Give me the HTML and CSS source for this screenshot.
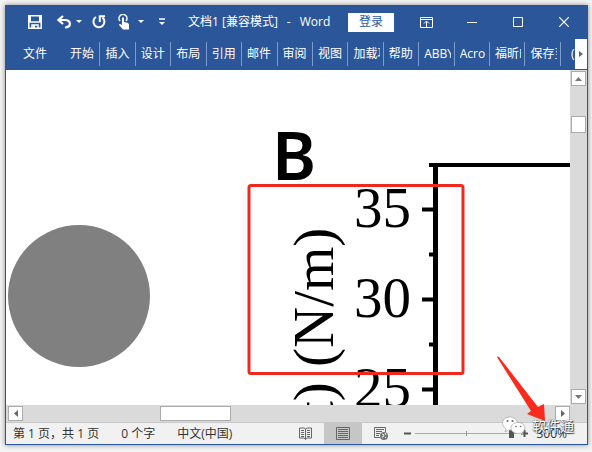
FILE: index.html
```html
<!DOCTYPE html>
<html lang="zh-CN">

<head>
    <meta charset="UTF-8">
    <meta name="viewport" content="width=device-width, initial-scale=1.0">
    <title>文档1 - Word</title>
    <link rel="stylesheet" href="styles.css">
</head>

<body>
    <div class="window">
        <header class="titlebar">
            <div class="quick">
                <button type="button" aria-label="保存">
                    <svg width="14" height="14" viewBox="0 0 14 14"><path d="M.8 .8H13.2V13.2H.8ZM1 7H13M4 13V10H10V13" fill="none" stroke="#fff" stroke-width="1.5"/><path d="M1 1H3V7H1ZM11 1H13V7H11ZM5 10H7V13H5Z" fill="#fff"/></svg>
                </button>
                <button type="button" class="undo" aria-label="撤消">
                    <svg width="25" height="14" viewBox="0 0 25 14"><path d="M6 1L1.5 5L6 9M2 5H8C14 5 15 12 8 12.500" fill="none" stroke="#fff" stroke-width="2.200"/><path d="M19 5H25L22 8Z" fill="#fff"/></svg>
                </button>
                <button type="button" class="redo" aria-label="重复">
                    <svg width="14" height="14" viewBox="0 0 14 14"><path d="M4 2A5.500 5.500 0 1 0 10.500 2.500" fill="none" stroke="#fff" stroke-width="2"/><path d="M7.800 7V1.200H13" fill="none" stroke="#fff" stroke-width="2"/></svg>
                </button>
                <button type="button" class="touch" aria-label="触摸模式">
                    <svg width="26" height="16" viewBox="0 0 26 16"><path d="M2 7A4 4 0 1 1 8 7" fill="none" stroke="#fff" stroke-width="1.500"/><path d="M4 4Q5 2.500 6 4V8L10 9Q11.500 10 11 12V15.500H5L1 11Q1 9 4 11Z" fill="#fff"/><path d="M20 6H26L23 9Z" fill="#fff"/></svg>
                </button>
                <button type="button" class="more" aria-label="自定义快速访问工具栏">
                    <svg width="6" height="8" viewBox="0 0 6 8"><path d="M0 1H6" stroke="#fff" stroke-width="1.500"/><path d="M0 4H6L3 7Z" fill="#fff"/></svg>
                </button>
            </div>
            <h1 class="title"><span>文档1 [兼容模式]</span><span>-</span><span>Word</span></h1>
            <button type="button" class="login">登录</button>
            <div class="controls">
                <button type="button" aria-label="功能区显示选项">
                    <svg width="13" height="11" viewBox="0 0 13 11"><path d="M.5 .5H12.500V10.500H.5ZM.5 2.500H12.500M6.500 10V4.500M4 6.500L6.500 4L9 6.500" fill="none" stroke="#fff"/></svg>
                </button>
                <button type="button" aria-label="最小化">
                    <svg width="10" height="11" viewBox="0 0 10 11"><path d="M0 5.500H10" stroke="#fff"/></svg>
                </button>
                <button type="button" aria-label="最大化">
                    <svg width="10" height="10" viewBox="0 0 10 10"><path d="M.5 .5H9.500V9.500H.5Z" fill="none" stroke="#fff"/></svg>
                </button>
                <button type="button" aria-label="关闭">
                    <svg width="10" height="10" viewBox="0 0 10 10"><path d="M0 0L10 10M10 0L0 10" stroke="#fff" stroke-width="1.200"/></svg>
                </button>
            </div>
        </header>

        <nav class="ribbon">
            <a href="#" class="file">文件</a>
            <div class="tabs">
                <a href="#"><span>开始</span></a>
                <a href="#"><span>插入</span></a>
                <a href="#"><span>设计</span></a>
                <a href="#"><span>布局</span></a>
                <a href="#"><span>引用</span></a>
                <a href="#"><span>邮件</span></a>
                <a href="#"><span>审阅</span></a>
                <a href="#"><span>视图</span></a>
                <a href="#"><span>加载项</span></a>
                <a href="#"><span>帮助</span></a>
                <a href="#"><span>ABBYY</span></a>
                <a href="#"><span>Acro</span></a>
                <a href="#"><span>福昕PDF</span></a>
                <a href="#"><span>保存至</span></a>
            </div>
            <span class="cut">(</span>
            <button type="button" class="scroll-tabs" aria-label="更多选项卡">
                <svg width="4" height="6" viewBox="0 0 4 6"><path d="M0 0L4 3L0 6Z" fill="#666"/></svg>
            </button>
        </nav>

        <main class="work">
            <svg class="page" viewBox="0 0 564 335" preserveAspectRatio="xMinYMin slice">
                <circle cx="73" cy="226" r="71" fill="#808080"/>
                <text class="mark" x="266" y="110">B</text>
                <g class="axis">
                    <path d="M423 95H564" stroke-width="4"/>
                    <path d="M429.500 93V335" stroke-width="5"/>
                    <path d="M416 139.500H429M416 229.500H429M416 319.500H429M423 184.500H429M423 274.500H429" stroke-width="4"/>
                </g>
                <g class="num">
                    <text x="348" y="157">35</text>
                    <text x="348" y="247">30</text>
                    <text x="348" y="337">25</text>
                    <text transform="translate(327 297) rotate(-90)">(N/m)</text>
                    <text transform="translate(327 347) rotate(-90)">t)</text>
                </g>
                <rect x="243" y="115.500" width="214" height="188" rx="2" fill="none" stroke="#ee2a20" stroke-width="3"/>
            </svg>

            <div class="vbar">
                <button type="button" aria-label="向上滚动"><svg width="7" height="4" viewBox="0 0 7 4"><path d="M0 4L3.500 0L7 4Z" fill="#777"/></svg></button>
                <div class="track"><div class="thumb"></div></div>
                <button type="button" aria-label="向下滚动"><svg width="7" height="4" viewBox="0 0 7 4"><path d="M0 0L3.500 4L7 0Z" fill="#777"/></svg></button>
            </div>

            <div class="hbar">
                <button type="button" aria-label="向左滚动"><svg width="4" height="7" viewBox="0 0 4 7"><path d="M4 0L0 3.500L4 7Z" fill="#666"/></svg></button>
                <div class="track"><div class="thumb"></div></div>
                <button type="button" aria-label="向右滚动"><svg width="4" height="7" viewBox="0 0 4 7"><path d="M0 0L4 3.500L0 7Z" fill="#666"/></svg></button>
            </div>
        </main>

        <footer class="status">
            <span>第 1 页，共 1 页</span>
            <span>0 个字</span>
            <span>中文(中国)</span>
            <div class="views">
                <button type="button" aria-label="阅读视图">
                    <svg width="13" height="13" viewBox="0 0 13 13"><path d="M.5 1H5L6.500 2L8 1H12.500V11H8L6.500 12L5 11H.5ZM6.500 2V13M2 3.500H5M2 5.500H5M2 7.500H5M2 9.500H5M8 3.500H11M8 5.500H11M8 7.500H11M8 9.500H11" fill="none" stroke="#666"/></svg>
                </button>
                <button type="button" class="on" aria-label="页面视图">
                    <svg width="14" height="13" viewBox="0 0 14 13"><path d="M.5 .5H13.500V12.500H.5ZM2 2.500H12M2 4.500H12M2 6.500H12M2 8.500H12M2 10.500H12" fill="none" stroke="#666"/></svg>
                </button>
                <button type="button" aria-label="Web 版式视图">
                    <svg width="14" height="13" viewBox="0 0 14 13"><path d="M6 10.500H.5V.5H11.500V5M2 2.500H10M2 4.500H8M2 6.500H6M2 8.500H5" fill="none" stroke="#666"/><circle cx="10" cy="9" r="4" fill="#777"/><path d="M8 7L10 8L9 10L8 10M11 6L12 8M11 11L12 10" fill="none" stroke="#eee"/></svg>
                </button>
            </div>
            <div class="zoom">
                <button type="button" aria-label="缩小"><svg width="7" height="3" viewBox="0 0 7 3"><path d="M0 1.500H7" stroke="#555" stroke-width="2"/></svg></button>
                <input type="range" min="0" max="100" value="96" aria-label="显示比例">
                <button type="button" aria-label="放大"><svg width="7" height="7" viewBox="0 0 7 7"><path d="M0 3.500H7M3.500 0V7" stroke="#555" stroke-width="2"/></svg></button>
                <span class="percent">300%</span>
            </div>
        </footer>

        <svg class="arrow" width="48" height="66" viewBox="0 0 48 66"><path d="M0 1Q0 0 2 1L41 51L47 48L48 65L30 58L34 55Z" fill="#fb2a1c"/></svg>
        <div class="watermark">
            <svg width="24" height="20" viewBox="0 0 24 20"><g fill="#fff" stroke="#999" stroke-width=".6"><path d="M8 1C3 1 .5 4 .5 7.500Q.5 11 4 13L3 16L6.500 14Q14 15 15.500 8C15.500 4 12 1 8 1Z"/><path d="M16 6.500C11.500 6.500 9 9 9 12C9 16 14 18.500 18.500 17L21 18.500L20.500 16Q23 14.500 23 12C23 9 20 6.500 16 6.500Z"/></g><g fill="#666"><circle cx="5.500" cy="5" r="1"/><circle cx="10.500" cy="5" r="1"/><circle cx="14" cy="10.500" r=".8"/><circle cx="18.500" cy="10.500" r=".8"/></g></svg>
            <span>软件通</span>
        </div>
    </div>
</body>

</html>
```

FILE: styles.css
```css
* {
    box-sizing: border-box;
}

body {
    margin: 0;
    height: 100vh;
    padding: 5px 4px 7px 5px;
    background: #f4f4f4;
    font-family: "Open Sans", "Noto Sans CJK SC", sans-serif;
    font-size: 12px;
    line-height: 16px;
}

button {
    display: flex;
    align-items: center;
    justify-content: center;
    padding: 0;
    border: none;
    background: none;
    font: inherit;
}

a {
    color: #fff;
    text-decoration: none;
}

.window {
    position: relative;
    display: flex;
    flex-direction: column;
    height: 100%;
    border: 1px solid #2b579a;
    box-shadow: 0 0 5px #888;
    background: #fff;
}

.titlebar {
    display: flex;
    align-items: center;
    height: 32px;
    background: #2b579a;
    color: #fff;
}

.quick {
    display: flex;
    align-items: center;
    padding-left: 22px;
}

.undo {
    margin-left: 15px;
}

.redo {
    margin-left: 10px;
}

.touch {
    margin-left: 12px;
}

.more {
    margin-left: 15px;
}

.title {
    display: flex;
    gap: 9px;
    margin: 0 0 0 23px;
    font-size: 12px;
    font-weight: normal;
    white-space: nowrap;
}

.login {
    width: 46px;
    height: 19px;
    margin-left: auto;
    background: #fff;
    color: #2b579a;
}

.controls {
    display: flex;
    margin-left: 9px;
}

.controls button {
    width: 46px;
    height: 32px;
}

.ribbon {
    display: flex;
    align-items: center;
    height: 32px;
    background: #2b579a;
    color: #fff;
}

.file {
    width: 59px;
    padding-left: 17px;
}

.tabs {
    display: flex;
    flex: 1;
    min-width: 0;
}

.tabs a {
    flex: 1 1 0;
    min-width: 0;
    padding: 4px 3px 4px 5px;
    border-right: 1px solid #7d9bcb;
}

.tabs span {
    display: block;
    overflow: hidden;
    white-space: nowrap;
}

.cut {
    width: 14px;
    padding-left: 10px;
    overflow: hidden;
}

.scroll-tabs {
    width: 12px;
    height: 30px;
    background: #fff;
}

.work {
    flex: 1;
    min-height: 0;
    display: grid;
    grid-template-columns: 1fr 17px;
    grid-template-rows: 1fr 17px;
}

.page {
    width: 100%;
    height: 100%;
    min-height: 0;
}

.mark {
    font: 600 67px "Noto Sans", sans-serif;
}

.num {
    font: 57px "Liberation Serif", serif;
}

.axis {
    stroke: #000;
}

.vbar,
.hbar {
    display: flex;
    padding: 1px;
    background: #dadada;
}

.vbar {
    flex-direction: column;
}

.hbar {
    grid-column: 1 / 3;
    padding: 1px 17px 1px 2px;
}

.vbar button,
.hbar button,
.thumb {
    width: 15px;
    height: 15px;
    border: 1px solid #ababab;
    background: #fff;
}

.track {
    flex: 1;
}

.vbar .track {
    padding-top: 30px;
}

.vbar .thumb {
    height: 17px;
}

.hbar .track {
    padding-left: 137px;
}

.hbar .thumb {
    width: 71px;
}

.status {
    display: flex;
    align-items: center;
    gap: 22px;
    height: 22px;
    padding-left: 7px;
    background: #f1f1f1;
    border-top: 1px solid #c8c8c8;
    color: #333;
    white-space: nowrap;
}

.views {
    display: flex;
    margin-left: auto;
}

.views button {
    width: 38px;
    height: 21px;
}

.views .on {
    background: #c6c6c6;
}

.zoom {
    display: flex;
    align-items: center;
    gap: 4px;
    margin-left: -18px;
    padding-right: 20px;
}

.zoom input {
    appearance: none;
    width: 102px;
    height: 15px;
    margin: 0;
    background:
        linear-gradient(#999, #999) center / 1px 5px no-repeat,
        linear-gradient(#aaa, #aaa) center / 100% 1px no-repeat;
}

.zoom input::-webkit-slider-thumb {
    appearance: none;
    width: 5px;
    height: 9px;
    background: #555;
}

.percent {
    padding-left: 4px;
}

/* arrow and watermark float over the window */
.arrow {
    position: absolute;
    right: 42px;
    bottom: 22px;
}

.watermark {
    position: absolute;
    right: 13px;
    bottom: 8px;
    display: flex;
    align-items: center;
    gap: 6px;
    color: #fff;
    font-size: 14px;
    line-height: 20px;
    text-shadow: 1px 1px 1px #333, 0 0 1px #333;
}
```
